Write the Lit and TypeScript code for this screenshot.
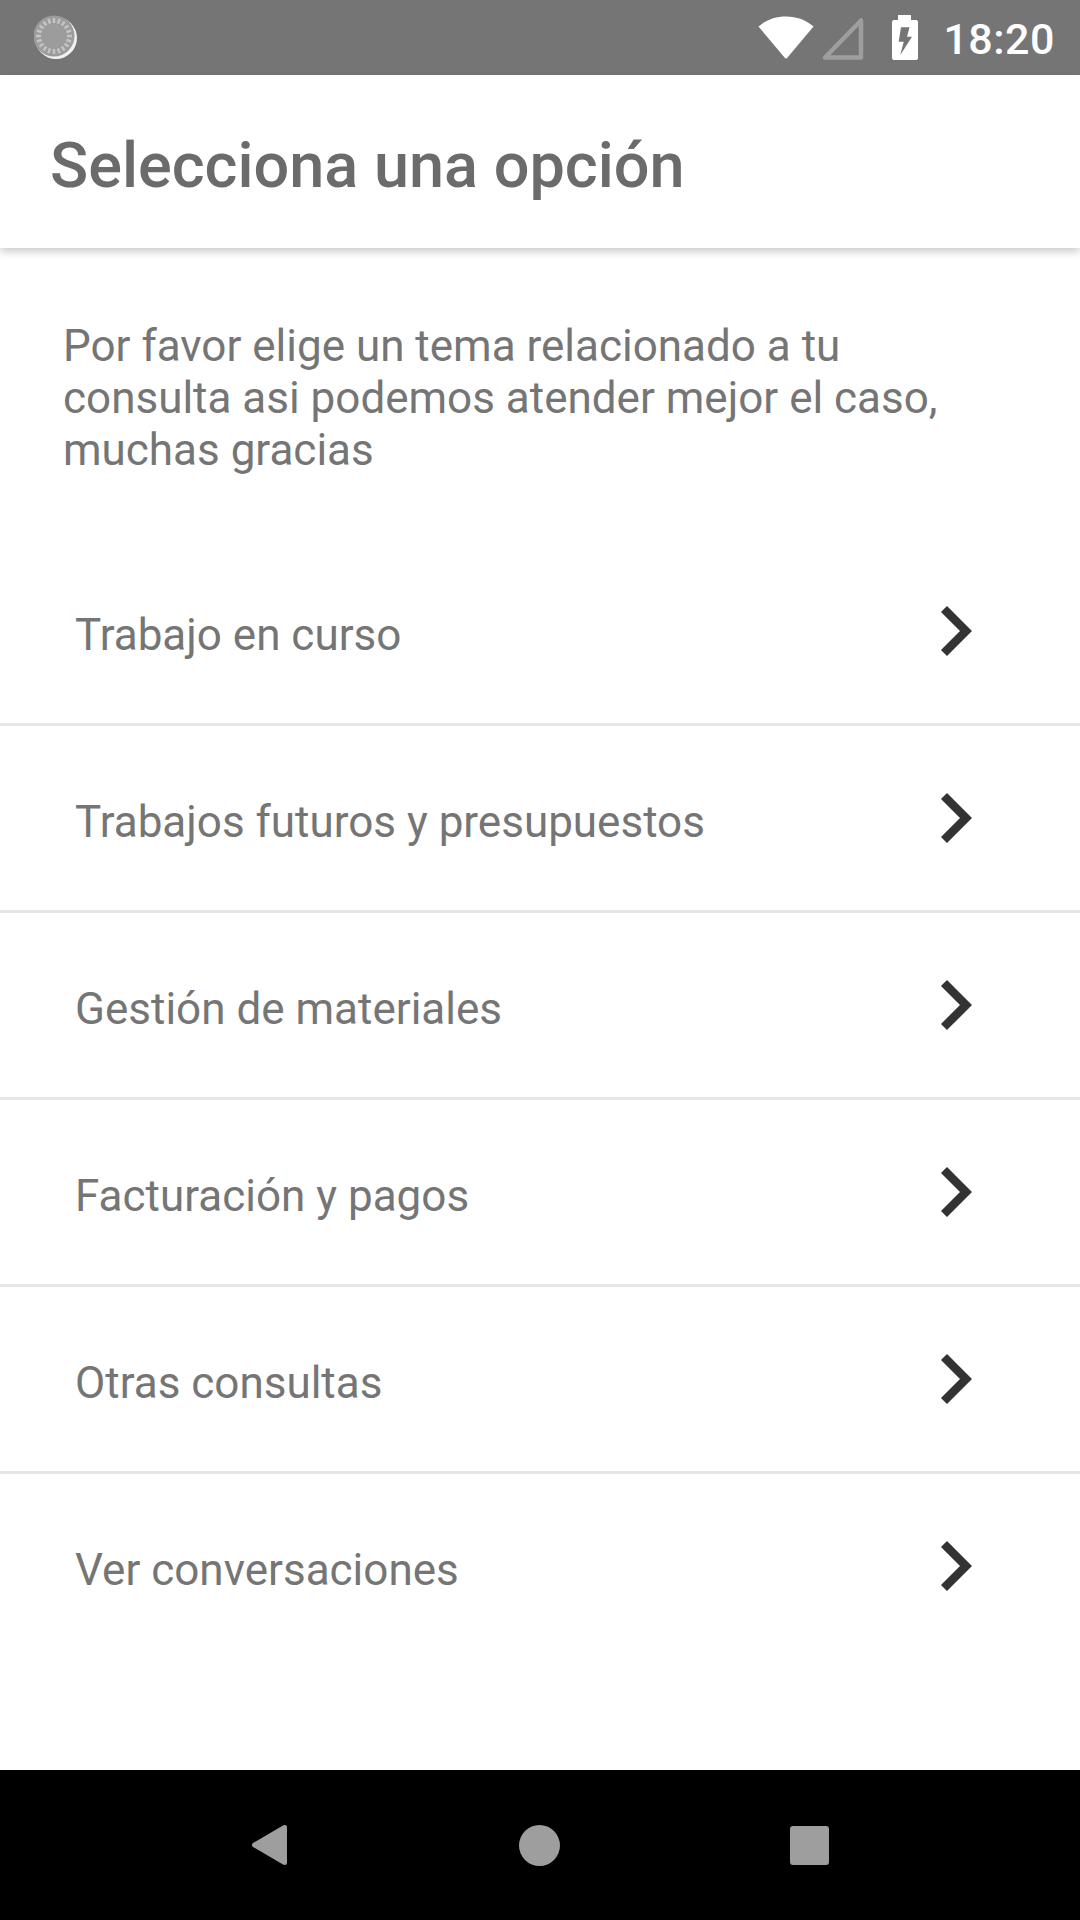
import { css, html, LitElement, svg } from "lit";
import { customElement, property } from "lit/decorators.js";

const OPTIONS = [
    "Trabajo en curso",
    "Trabajos futuros y presupuestos",
    "Gestión de materiales",
    "Facturación y pagos",
    "Otras consultas",
    "Ver conversaciones",
];

// spokes of the loader in the status bar
const spokes = Array.from({ length: 20 }, (_, i) => {
    const a = (i / 20) * Math.PI * 2;
    return svg`<line x1=${20 + Math.cos(a) * 13} y1=${21 + Math.sin(a) * 13} x2=${20 + Math.cos(a) * 18} y2=${21 + Math.sin(a) * 18} />`;
});

@customElement("status-bar")
export class StatusBar extends LitElement {
    static styles = css`
        :host {
            display: flex;
            flex: none;
            align-items: center;
            height: 75px;
            padding: 0 25px 0 34px;
            background-color: #757575;
            color: #fff;
        }

        .loader {
            margin-right: auto;
        }

        .wifi {
            margin-right: 7px;
        }

        .signal {
            margin-right: 27px;
        }

        .battery {
            margin-right: 25px;
        }

        .time {
            font: 500 43px "Roboto", sans-serif;
            letter-spacing: 0.5px;
            margin-top: 2px;
        }
    `;

    render() {
        return html`
            <svg class="loader" width="46" height="46" viewBox="0 0 46 46">
                <circle cx="22" cy="23" r="21" fill="#fff" opacity="0.9" />
                <circle cx="20" cy="21" r="20.5" fill="#9c9c9c" />
                <g stroke="#c4c4c4" stroke-width="2.5">${spokes}</g>
            </svg>
            <svg class="wifi" width="56" height="44" viewBox="0 0 56 44">
                <path d="M0.5 10.5C8 4 17 0.500 28 0.500C39 0.500 48 4 55.500 10.500L29.500 41.500C28.500 42.700 27.500 42.700 26.500 41.500Z" fill="#fff" />
            </svg>
            <svg class="signal" width="44" height="44" viewBox="0 0 44 44">
                <path d="M40 4.500V41.500H4Z" fill="none" stroke="#9e9e9e" stroke-width="4.500" stroke-linejoin="round" />
            </svg>
            <svg class="battery" width="26" height="45" viewBox="0 0 26 45">
                <path fill-rule="evenodd" d="M6 0H19V5H24C25.100 5 26 5.900 26 7V43C26 44.100 25.100 45 24 45H2C0.900 45 0 44.100 0 43V7C0 5.900 0.900 5 2 5H6ZM9 12.300L6.700 26.700H11.700L8.300 40L20 21.700H15L17.500 12.300Z" fill="#fff" />
            </svg>
            <span class="time">18:20</span>
        `;
    }
}

@customElement("option-row")
export class OptionRow extends LitElement {
    static styles = css`
        :host {
            display: flex;
            align-items: center;
            justify-content: space-between;
            height: 187px;
            box-sizing: border-box;
            padding: 0 108px 0 75px;
            border-bottom: 3px solid #e6e6e6;
            font: 400 44px "Roboto", sans-serif;
            color: #757575;
        }

        :host(:last-child) {
            border-bottom-color: transparent;
        }

        span {
            margin-top: 8px;
        }

        svg {
            display: block;
            margin-top: -1px;
        }
    `;

    @property({ type: String })
    label = "";

    render() {
        return html`
            <span>${this.label}</span>
            <svg width="32" height="52" viewBox="0 0 32 52">
                <path d="M4 4L26 26L4 48" fill="none" stroke="#333" stroke-width="8.500" />
            </svg>
        `;
    }
}

@customElement("app-root")
export class AppRoot extends LitElement {
    static styles = css`
        :host {
            display: flex;
            flex-direction: column;
            height: 1920px;
            background-color: #fff;
            font-family: "Roboto", sans-serif;
        }

        header {
            flex: none;
            display: flex;
            align-items: center;
            height: 173px;
            box-sizing: border-box;
            padding: 7px 0 0 50px;
            background-color: #fff;
            box-shadow: 0 4px 8px rgba(0, 0, 0, 0.2);
            font-size: 63px;
            font-weight: 500;
            color: #6b6b6b;
        }

        main {
            flex: 1;
            display: flex;
            flex-direction: column;
        }

        .intro {
            margin: 0;
            padding: 72px 63px 0;
            font-size: 44px;
            line-height: 52px;
            color: #757575;
        }

        .options {
            margin-top: 63px;
        }

        nav {
            flex: none;
            display: flex;
            align-items: center;
            gap: 230.500px;
            height: 150px;
            padding-left: 251px;
            background-color: #000;
        }
    `;

    render() {
        return html`
            <status-bar></status-bar>
            <header>Selecciona una opción</header>
            <main>
                <p class="intro">
                    Por favor elige un tema relacionado a tu<br />
                    consulta asi podemos atender mejor el caso,<br />
                    muchas gracias
                </p>
                <div class="options">
                    ${OPTIONS.map((label) => html`<option-row label=${label}></option-row>`)}
                </div>
            </main>
            <nav>
                <svg width="37" height="42" viewBox="0 0 37 42">
                    <path d="M2 19L32 1.500C34 0.500 36 1 36 3.500V38.500C36 41 34 41.500 32 40.500L2 23C0.500 22 0.500 20 2 19Z" fill="#9e9e9e" />
                </svg>
                <svg width="41" height="41" viewBox="0 0 41 41">
                    <circle cx="20.500" cy="20.500" r="20.500" fill="#9e9e9e" />
                </svg>
                <svg width="39" height="39" viewBox="0 0 39 39">
                    <rect width="39" height="39" rx="3" fill="#9e9e9e" />
                </svg>
            </nav>
        `;
    }
}
